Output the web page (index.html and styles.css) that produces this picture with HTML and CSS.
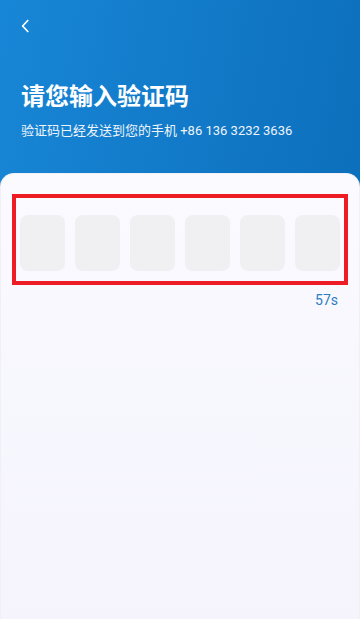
FILE: index.html
```html
<!DOCTYPE html>
<html lang="zh">
<head>
<meta charset="utf-8">
<meta name="viewport" content="width=device-width, initial-scale=1">
<link rel="stylesheet" href="styles.css">
</head>
<body>
<div class="page">
  <header class="hero">
    <button class="back" aria-label="返回">
      <svg width="10" height="14" viewBox="0 0 10 14"><path d="M6.8 1.5 L1.6 7 L6.8 12.5" fill="none" stroke="#fff" stroke-width="1.7" stroke-linecap="round" stroke-linejoin="round"/></svg>
    </button>
    <h1 class="title">请您输入验证码</h1>
    <p class="subtitle">验证码已经发送到您的手机 +86 136 3232 3636</p>
  </header>
  <main class="card">
    <div class="code-frame">
      <div class="code-cell"></div>
      <div class="code-cell"></div>
      <div class="code-cell"></div>
      <div class="code-cell"></div>
      <div class="code-cell"></div>
      <div class="code-cell"></div>
    </div>
    <div class="timer-row"><span class="timer">57s</span></div>
  </main>
</div>
</body>
</html>
```
FILE: styles.css
```css
* { box-sizing: border-box; }
html, body { margin: 0; padding: 0; }
body {
  width: 360px;
  height: 619px;
  overflow: hidden;
  font-family: Roboto, "Noto Sans CJK SC", sans-serif;
  background: #0b6cb8;
}
.page {
  display: flex;
  flex-direction: column;
  height: 619px;
  background: linear-gradient(100deg, #1886d6 0%, #0a6bb7 100%);
}
.hero {
  display: flex;
  flex-direction: column;
  padding: 0 20px 0 21px;
  height: 173px;
  flex: none;
}
.back {
  width: 10px;
  height: 14px;
  margin: 19px 0 0 0;
  padding: 0;
  border: 0;
  background: none;
  display: flex;
}
.title {
  margin: 48px 0 0 0;
  font-size: 24px;
  line-height: 32px;
  font-weight: 700;
  color: #fff;
}
.subtitle {
  margin: 9px 0 0 0;
  font-size: 13px;
  line-height: 18px;
  color: #eef4fb;
}
.card {
  flex: 1;
  background: linear-gradient(180deg, #fafaff 0%, #f5f4fd 100%);
  border-radius: 14px 14px 0 0;
  border: 1px solid #f0f0f6;
  border-bottom: 0;
  padding: 20px 11px 0 11px;
  display: flex;
  flex-direction: column;
}
.code-frame {
  border: 4px solid #ee1c25;
  display: flex;
  align-items: flex-start;
  justify-content: space-between;
  padding: 17px 4px 10px 4px;
}
.code-cell {
  width: 45px;
  height: 56px;
  border-radius: 8px;
  background: #f0f0f2;
}
.timer-row {
  display: flex;
  justify-content: flex-end;
  padding: 6px 10px 0 0;
}
.timer {
  font-size: 14px;
  line-height: 18px;
  color: #2b7ec1;
}
```
